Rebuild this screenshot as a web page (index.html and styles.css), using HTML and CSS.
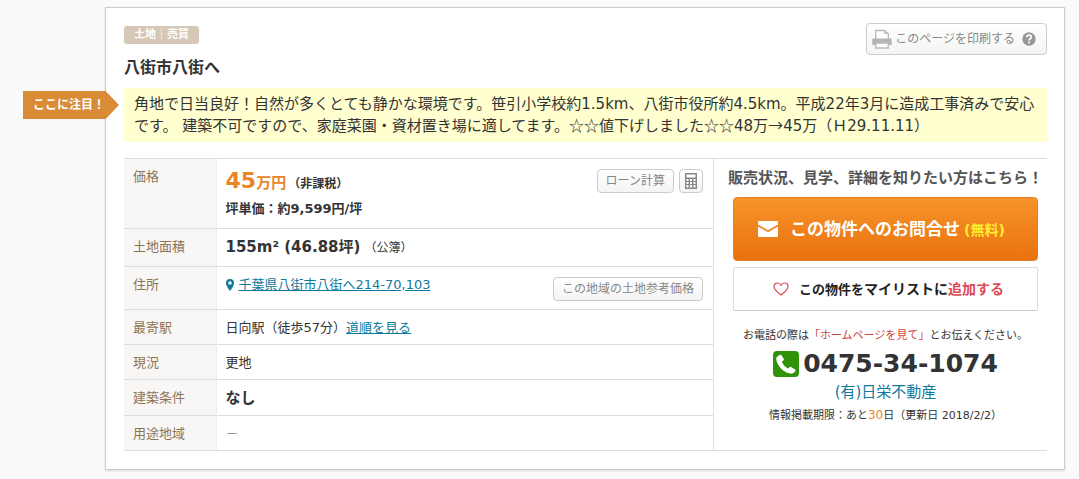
FILE: index.html
```html
<!DOCTYPE html>
<html lang="ja">
<head>
<meta charset="utf-8">
<meta name="viewport" content="width=device-width, initial-scale=1">
<title>八街市八街へ</title>
<link rel="stylesheet" href="styles.css">
</head>
<body>
<main class="card">
  <header class="head">
    <div class="head-text">
      <span class="tag">土地｜売買</span>
      <h1 class="title">八街市八街へ</h1>
    </div>
    <button type="button" class="btn btn-print">
      <svg class="icon-print" viewBox="0 0 20 20" aria-hidden="true">
        <path d="M3.700 10V1.500h8.800l3.800 3.300V10" fill="#fff" stroke="#bbb" stroke-width="1.400"/>
        <path d="M12.300 1.300v3.700h4z" fill="#bbb"/>
        <path d="M1.500 9.500h17q1.200 0 1.200 1.200V16H.3v-5.300q0-1.200 1.200-1.200z" fill="#b4b4b4"/>
        <path d="M3.700 14h12.600v5H3.700z" fill="#fff" stroke="#bbb" stroke-width="1.400"/>
      </svg>
      <span>このページを印刷する</span>
      <svg class="icon-help" viewBox="0 0 14 14" aria-hidden="true">
        <circle cx="7" cy="7" r="6.7" fill="#999"/>
        <path d="M4.8 5.3C4.8 2.4 9.3 2.5 9.3 5.2 9.3 6.8 7.1 6.8 7.1 8.6" fill="none" stroke="#fff" stroke-width="1.7"/>
        <rect x="6.2" y="9.6" width="1.8" height="1.7" fill="#fff"/>
      </svg>
    </button>
  </header>

  <section class="note">
    <span class="ribbon">ここに注目！</span>
    <p class="note-text">角地で日当良好！自然が多くとても静かな環境です。笹引小学校約1.5km、八街市役所約4.5km。平成22年3月に造成工事済みで安心です。 建築不可ですので、家庭菜園・資材置き場に適してます。<span class="wide">☆☆</span>値下げしました<span class="wide">☆☆</span>48万<span class="wide">→</span>45万（Ｈ29.11.11）</p>
  </section>

  <div class="body">
    <table class="spec">
      <tr class="row-price">
        <th scope="row">価格</th>
        <td>
          <div class="cell">
            <div>
              <div class="price"><span class="price-num">45</span>万円<span class="price-tax">（非課税）</span></div>
              <div class="unit">坪単価：約9,599円/坪</div>
            </div>
            <div class="tools">
              <button type="button" class="btn">ローン計算</button>
              <button type="button" class="btn btn-calc" aria-label="電卓">
                <svg class="icon-calc" viewBox="0 0 12 16" aria-hidden="true">
                  <path d="M0 0h12v16H0z" fill="#888"/>
                  <path d="M1.5 1.5h9v3h-9zM1.5 6h2v2h-2zM5 6h2v2H5zM8.500 6h2v2h-2zM1.500 9h2v2h-2zM5 9h2v2H5zM8.500 9h2v2h-2zM1.500 12h2v2.500h-2zM5 12h2v2.500H5zM8.500 12h2v2.500h-2z" fill="#fff"/>
                </svg>
              </button>
            </div>
          </div>
        </td>
      </tr>
      <tr class="row-area">
        <th scope="row">土地面積</th>
        <td><strong class="big">155m² (46.88坪)</strong> <span class="small">（公簿）</span></td>
      </tr>
      <tr class="row-address">
        <th scope="row">住所</th>
        <td>
          <div class="cell">
            <div class="place">
              <svg class="icon-pin" viewBox="0 0 8 12" aria-hidden="true"><path d="M4 0a4 4 0 0 0-4 4c0 3 4 8 4 8s4-5 4-8a4 4 0 0 0-4-4zm0 2.200a1.800 1.800 0 1 1 0 3.600 1.800 1.800 0 0 1 0-3.600z" fill="#0f7a9c" fill-rule="evenodd"/></svg>
              <a href="#map">千葉県八街市八街へ214-70,103</a>
            </div>
            <button type="button" class="btn">この地域の土地参考価格</button>
          </div>
        </td>
      </tr>
      <tr class="row-plain">
        <th scope="row">最寄駅</th>
        <td>日向駅（徒歩57分）<a href="#route">道順を見る</a></td>
      </tr>
      <tr class="row-plain">
        <th scope="row">現況</th>
        <td>更地</td>
      </tr>
      <tr class="row-cond">
        <th scope="row">建築条件</th>
        <td><strong class="big">なし</strong></td>
      </tr>
      <tr class="row-plain">
        <th scope="row">用途地域</th>
        <td><span class="none">－</span></td>
      </tr>
    </table>

    <aside class="contact">
      <h2 class="contact-title">販売状況、見学、詳細を知りたい方はこちら！</h2>
      <button type="button" class="inquiry">
        <svg class="icon-mail" viewBox="0 0 20 16" aria-hidden="true">
          <path d="M1 0h18a1 1 0 0 1 1 1v2.500L10 9.300 0 3.500V1a1 1 0 0 1 1-1z" fill="#fff"/>
          <path d="M0 5.500l10 5.800 10-5.800V15a1 1 0 0 1-1 1H1a1 1 0 0 1-1-1z" fill="#fff"/>
        </svg>
        <span>この物件へのお問合せ<span class="free">(無料)</span></span>
      </button>
      <button type="button" class="mylist">
        <svg class="icon-heart" viewBox="0 0 16 14" aria-hidden="true"><path d="M8 13C5 10.500 1 8 1 4.600 1 2.500 2.500 1 4.400 1 6 1 7.300 1.900 8 3.300 8.700 1.900 10 1 11.600 1 13.500 1 15 2.500 15 4.600 15 8 11 10.500 8 13z" fill="none" stroke="#dc4a58" stroke-width="1.200"/></svg>
        <span>この物件を<span class="mylist-name">マイリストに</span><span class="mylist-add">追加する</span></span>
      </button>
      <p class="tel-note">お電話の際は<span class="red">「ホームページを見て」</span>とお伝えください。</p>
      <p class="tel">
        <svg class="icon-tel" viewBox="0 0 26 26" aria-hidden="true">
          <rect width="26" height="26" rx="4" fill="#2f9208"/>
          <path d="M4.200 5.600L7 3.800c.5-.3 1-.2 1.300.3l2.500 4c.3.500.1 1-.3 1.300L8.900 10.600c.6 2.800 3.300 5.800 6.300 6.900l1.500-1.500c.4-.4.900-.4 1.400-.1l4.100 2.500c.5.300.6.800.3 1.300-1 1.900-2.700 3-4.900 2.800C10.800 21.900 4.100 15 3.300 8.600c-.1-1.200.1-2.300.9-3z" fill="#fff"/>
        </svg>
        <span>0475-34-1074</span>
      </p>
      <p class="company"><a href="#company">(有)日栄不動産</a></p>
      <p class="limit">情報掲載期限：あと<span class="days">30</span>日（更新日 2018/2/2）</p>
    </aside>
  </div>
</main>
</body>
</html>
```
FILE: styles.css
```css
* { box-sizing: border-box; }

body {
  margin: 0;
  padding: 7px 14px 9px 105px;
  background: #fafafa;
  color: #333;
  font-family: "DejaVu Sans", "Noto Sans CJK JP", sans-serif;
  font-size: 13px;
  line-height: 20px;
  text-spacing-trim: space-all;
}

h1, h2, p { margin: 0; }

a { color: #0f7a9c; }

button { font: inherit; text-spacing-trim: inherit; }

svg { display: block; flex: none; }

.card {
  padding: 15px 17px 18px 18px;
  background: #fff;
  border: 1px solid #ccc;
  box-shadow: 0 1px 2px rgba(0, 0, 0, 0.12);
}

.head {
  display: flex;
  justify-content: space-between;
  align-items: flex-start;
}

.head-text { padding-top: 3px; }

.tag {
  display: block;
  width: max-content;
  padding: 0 10px;
  border-radius: 3px;
  background: #d6c8b6;
  color: #fff;
  font-size: 11px;
  font-weight: bold;
  line-height: 18px;
}

.title {
  padding: 12px 0 8px;
  font-size: 16px;
  line-height: 24px;
}

.btn {
  padding: 0 8px;
  border: 1px solid #ccc;
  border-radius: 4px;
  background: linear-gradient(#fff, #f4f4f4);
  color: #888;
  font-size: 12px;
  line-height: 22px;
  white-space: nowrap;
}

.btn-print {
  display: flex;
  align-items: center;
  padding: 0 10px 0 5px;
  line-height: 30px;
  gap: 3px;
}

.icon-print { width: 20px; height: 20px; }
.icon-help { width: 14px; height: 14px; margin-left: 4px; }

.note {
  position: relative;
  padding: 5px 10px;
  background: #ffffd0;
}

.note-text {
  font-size: 15px;
  line-height: 22px;
}

.wide {
  font-family: "Noto Sans CJK JP", sans-serif;
  line-height: 16px;
}

.ribbon {
  position: absolute;
  top: 3px;
  left: -101px;
  padding: 0 14px 0 10px;
  background: #d98c35;
  clip-path: polygon(0 0, 86% 0, 100% 50%, 86% 100%, 0 100%);
  color: #fff;
  font-size: 12px;
  font-weight: bold;
  line-height: 28px;
  white-space: nowrap;
}

.body {
  display: grid;
  grid-template-columns: 590fr 333fr;
  margin-top: 16px;
  border-top: 1px solid #ddd;
  border-bottom: 1px solid #ddd;
}

.spec {
  width: 100%;
  border-collapse: collapse;
  border-right: 1px solid #ddd;
}

.spec th,
.spec td {
  padding: 8px 10px 6px 9px;
  text-align: left;
  vertical-align: top;
}

.spec tr + tr { border-top: 1px solid #ddd; }

.spec th {
  width: 92px;
  padding-right: 0;
  border-right: 1px solid #eee;
  background: #f9f7f5;
  color: #8c7557;
  font-weight: normal;
  white-space: nowrap;
}

.row-price { height: 69px; }
.row-area { height: 38px; }
.row-address { height: 43px; }
.row-plain { height: 35px; }
.row-cond { height: 36px; }

.cell {
  display: flex;
  justify-content: space-between;
}

.price {
  color: #ea8428;
  font-size: 15px;
  font-weight: bold;
  line-height: 28px;
}

.price-num { font-size: 22px; }

.price-tax {
  margin-left: 2px;
  color: #333;
  font-size: 12px;
}

.unit {
  font-weight: bold;
  line-height: 22px;
}

.tools {
  display: flex;
  align-items: flex-start;
  gap: 5px;
  padding-top: 2px;
}

.btn-calc {
  padding: 3px 5px;
}

.icon-calc { width: 12px; height: 16px; }

.big { font-size: 15px; }
.small { font-size: 12px; }
.none { color: #999; }

.place {
  display: flex;
  align-items: center;
  gap: 5px;
  height: 20px;
}

.icon-pin { width: 8px; height: 12px; }

.row-address .btn { margin-top: 2px; }

.contact {
  padding: 8px 9px 0 19px;
  text-align: center;
}

.contact-title {
  margin: 0 -8px;
  color: #555;
  font-size: 15px;
  line-height: 22px;
  white-space: nowrap;
}

.inquiry,
.mylist {
  display: flex;
  width: 100%;
  justify-content: center;
  align-items: center;
  font-weight: bold;
}

.inquiry {
  height: 64px;
  margin-top: 8px;
  padding: 0 8px 0 0;
  gap: 12px;
  border: 1px solid #e08020;
  border-radius: 4px;
  background: linear-gradient(#f7932a, #e9720f);
  color: #fff;
  font-size: 17px;
}

.icon-mail { width: 20px; height: 16px; }

.free {
  margin-left: 4px;
  color: #ffee30;
  font-size: 14px;
}

.mylist {
  height: 44px;
  margin-top: 6px;
  padding: 0 0 0 6px;
  gap: 10px;
  border: 1px solid #ddd;
  border-bottom-color: #ccc;
  border-radius: 2px;
  background: #fff;
  color: #222;
  font-size: 13px;
}

.icon-heart { width: 16px; height: 14px; }
.mylist-name { font-size: 14px; }

.mylist-add {
  color: #dc4a58;
  font-size: 14px;
}

.tel-note {
  margin-top: 15px;
  font-size: 11px;
  white-space: nowrap;
}

.red { color: #d0443c; }

.tel {
  display: flex;
  justify-content: center;
  align-items: center;
  gap: 4px;
  margin-top: 4px;
  font-size: 25px;
  font-weight: bold;
  line-height: 28px;
}

.icon-tel { width: 26px; height: 26px; }

.company {
  margin-top: 3px;
  font-size: 15px;
  line-height: 22px;
}

.company a { text-decoration: none; }

.limit {
  margin-top: 2px;
  font-size: 11px;
}

.days {
  color: #ea8428;
  font-size: 12px;
}
```
